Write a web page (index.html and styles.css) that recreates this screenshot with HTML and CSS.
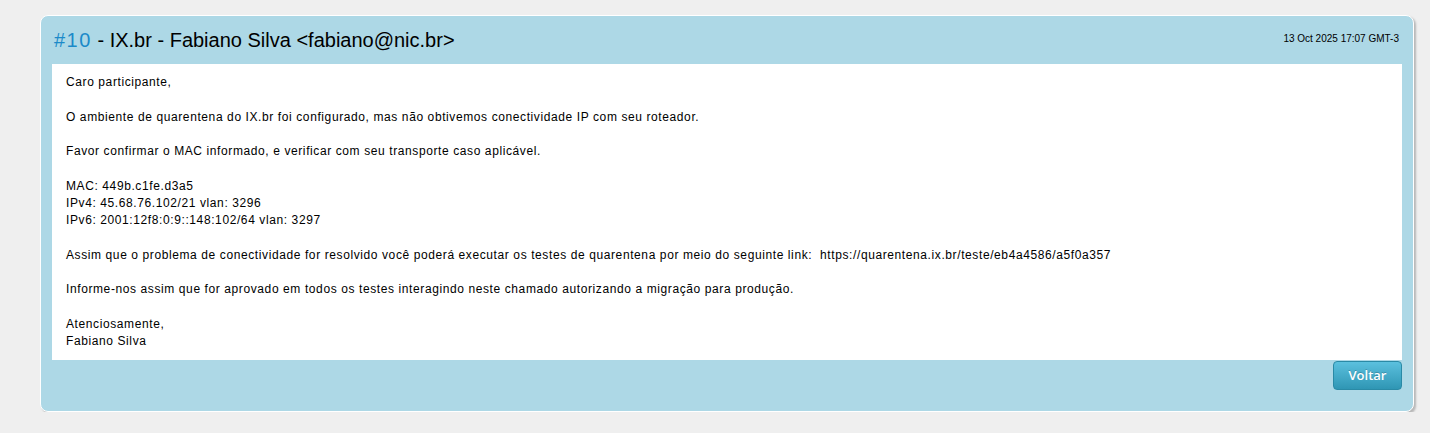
FILE: index.html
```html
<!DOCTYPE html>
<html lang="pt-BR">
<head>
  <meta charset="UTF-8">
  <meta name="viewport" content="width=device-width, initial-scale=1.0">
  <title>Chamado #10</title>
  <link rel="stylesheet" href="styles.css">
</head>
<body>

  <div class="ticket">
    <div class="ticket-header">
      <h2><span class="ticket-num">#10</span> - IX.br - Fabiano Silva &lt;fabiano@nic.br&gt;</h2>
      <span class="ticket-date">13 Oct 2025 17:07 GMT-3</span>
    </div>

    <div class="ticket-body">
      Caro participante,<br>
      <br>
      O ambiente de quarentena do IX.br foi configurado, mas não obtivemos conectividade IP com seu roteador.<br>
      <br>
      Favor confirmar o MAC informado, e verificar com seu transporte caso aplicável.<br>
      <br>
      MAC: 449b.c1fe.d3a5<br>
      IPv4: 45.68.76.102/21 vlan: 3296<br>
      IPv6: 2001:12f8:0:9::148:102/64 vlan: 3297<br>
      <br>
      Assim que o problema de conectividade for resolvido você poderá executar os testes de quarentena por meio do seguinte link:&nbsp; https://quarentena.ix.br/teste/eb4a4586/a5f0a357<br>
      <br>
      Informe-nos assim que for aprovado em todos os testes interagindo neste chamado autorizando a migração para produção.<br>
      <br>
      Atenciosamente,<br>
      Fabiano Silva
    </div>

    <div class="ticket-footer">
      <button class="btn-voltar" type="button">Voltar</button>
    </div>
  </div>

</body>
</html>
```

FILE: styles.css
```css
body {
  margin: 0;
  padding: 15px 0 0 40px;
  background-color: #efefef;
  font-family: 'Liberation Sans', Arial, sans-serif;
  color: black;
}

.ticket {
  width: 1374px;
  box-sizing: border-box;
  background-color: #add8e6;
  border: 1px solid white;
  border-radius: 8px;
  box-shadow: 2px 2px 2px #b8b8b8;
  padding: 0 11px 21px 11px;
}

.ticket-header {
  display: flex;
  justify-content: space-between;
  align-items: center;
  height: 48px;
}

.ticket-header h2 {
  margin: 0 0 0 2px;
  font-size: 20px;
  font-weight: normal;
  padding-top: 1px;
}

.ticket-num {
  color: #1b8ac9;
  letter-spacing: 1.5px;
}

.ticket-date {
  font-size: 10px;
  margin-right: 3px;
  margin-bottom: 3px;
}

.ticket-body {
  background-color: white;
  padding: 10px 14px 9px 14px;
  font-size: 12px;
  line-height: 17.28px;
  letter-spacing: 0.6px;
}

.ticket-footer {
  display: flex;
  justify-content: flex-end;
  padding-top: 1px;
}

.btn-voltar {
  height: 29px;
  width: 69px;
  padding: 0;
  font-family: 'Open Sans', sans-serif;
  font-size: 13px;
  font-weight: 600;
  color: white;
  background: linear-gradient(#5bc0de, #2f96b4);
  border: 1px solid #2a8aa6;
  border-radius: 4px;
  text-shadow: 0 -1px 0 rgba(0, 0, 0, 0.2);
  cursor: pointer;
}
```
